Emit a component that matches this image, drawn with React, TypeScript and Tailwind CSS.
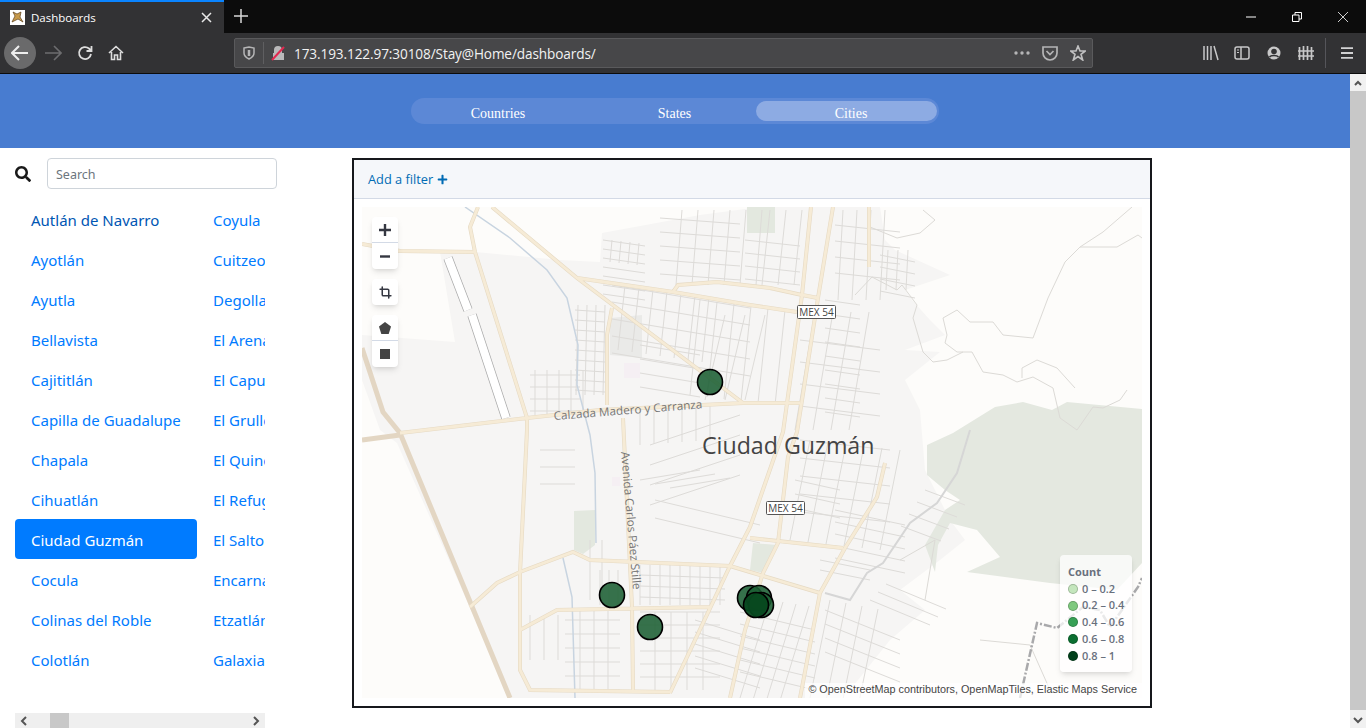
import React from "react";
import { FaSearch, FaPlus } from "react-icons/fa";
import { Crop } from "lucide-react";

const leftCities = ["Autlán de Navarro", "Ayotlán", "Ayutla", "Bellavista", "Cajititlán", "Capilla de Guadalupe", "Chapala", "Cihuatlán", "Ciudad Guzmán", "Cocula", "Colinas del Roble", "Colotlán"];
const rightCities = ["Coyula", "Cuitzeo", "Degollado", "El Arenal", "El Capulín", "El Grullo", "El Quince", "El Refugio", "El Salto", "Encarnación", "Etzatlán", "Galaxia"];

const legend = [
  { label: "0 – 0.2", color: "bg-[#c4e6bd]" },
  { label: "0.2 – 0.4", color: "bg-[#7fc97f]" },
  { label: "0.4 – 0.6", color: "bg-[#37a055]" },
  { label: "0.6 – 0.8", color: "bg-[#0b6e30]" },
  { label: "0.8 – 1", color: "bg-[#00401a]" },
];

// parallel street lines: first segment, step, count
const hatch = (x1: number, y1: number, x2: number, y2: number, dx: number, dy: number, n: number) => {
  let d = "";
  for (let i = 0; i < n; i++) d += `M${x1 + dx * i} ${y1 + dy * i}L${x2 + dx * i} ${y2 + dy * i}`;
  return d;
};

const streets = [
  hatch(603, 240, 645, 246, 0, 9, 7),
  hatch(612, 240, 610, 262, 9, 1, 4),
  hatch(660, 218, 740, 224, 0, 14, 5),
  hatch(682, 210, 676, 285, 16, 0, 6),
  hatch(745, 240, 800, 246, 0, 13, 4),
  hatch(770, 210, 762, 285, 16, 0, 3),
  hatch(612, 285, 750, 308, 0, 17, 5),
  hatch(625, 285, 618, 350, 14, 2, 7),
  hatch(700, 300, 690, 395, 17, 2, 6),
  hatch(575, 310, 605, 312, 0, 10, 9),
  hatch(578, 305, 576, 395, 9, 0, 4),
  hatch(640, 345, 700, 355, 0, 14, 4),
  hatch(530, 375, 580, 375, 0, 12, 4),
  hatch(535, 370, 535, 415, 12, 0, 5),
  hatch(825, 300, 860, 305, 0, 14, 9),
  hatch(843, 210, 838, 300, 14, 0, 4),
  hatch(835, 225, 900, 232, 0, 16, 4),
  hatch(765, 315, 745, 400, -20, 0, 3),
  hatch(815, 312, 795, 430, 18, 0, 4),
  hatch(800, 340, 880, 350, 0, 22, 4),
  hatch(800, 440, 890, 450, 0, 18, 5),
  hatch(810, 440, 790, 540, 18, 2, 6),
  hatch(650, 445, 740, 415, 0, 20, 4),
  hatch(640, 480, 700, 470, 15, 4, 3),
  hatch(655, 500, 760, 525, 0, 18, 2),
  hatch(640, 410, 640, 445, 14, -1, 6),
  hatch(590, 540, 590, 600, 12, 0, 2),
  hatch(540, 450, 575, 450, 0, 17, 3),
  hatch(600, 570, 600, 605, 9, 0, 3),
  hatch(640, 565, 640, 605, 10, 0, 9),
  hatch(640, 575, 725, 578, 0, 11, 3),
  hatch(640, 612, 720, 612, 0, 13, 6),
  hatch(655, 612, 655, 690, 16, 0, 4),
  hatch(565, 620, 620, 620, 0, 14, 6),
  hatch(580, 610, 580, 690, 14, 0, 3),
  hatch(530, 615, 530, 660, 14, 0, 3),
  hatch(695, 620, 760, 640, 0, 12, 5),
  hatch(770, 600, 740, 698, 13, 2, 4),
  hatch(740, 612, 815, 630, 0, 12, 6),
  hatch(830, 600, 810, 698, 16, 3, 4),
  hatch(825, 610, 900, 640, 0, 14, 4),
  hatch(835, 510, 905, 525, 0, 12, 5),
  hatch(795, 480, 840, 490, 0, 14, 3),
  hatch(925, 490, 965, 505, -8, 12, 4),
  hatch(870, 600, 930, 625, 8, -8, 3),
  hatch(820, 560, 870, 570, 0, 10, 2),
  hatch(880, 255, 915, 262, 0, 12, 4),
  hatch(888, 250, 886, 290, 10, 0, 3),
].join("");

const roads = [
  "M362 244L400 251L475 252",
  "M478 207L470 227L475 252L527 418L527 430L520 573V670L530 690L670 692",
  "M492 207L577 278L743 403",
  "M577 278L673 292L750 305L797 312M673 292L678 285L717 282L770 288L802 295L818 298",
  "M400 433L527 418L600 410L743 403L800 403",
  "M811 207L802 295L783 432L750 527L730 566L670 693",
  "M833 207L818 298L797 432L788 457L778 543L763 573L745 630L730 698",
  "M869 207V267",
  "M470 607L497 583L520 572L573 552L590 560L730 566L750 572L820 593",
  "M520 630L557 610L710 607",
  "M623 418L632 607L633 690",
  "M612 308L607 335L607 405",
  "M750 538L843 548",
  "M885 463L877 497L845 548L820 593L800 698",
].join("");

const Browser: React.FC = () => (
  <div className="bg-[#323234] text-[#e0e0e1]">
    <div className="flex h-[33px] bg-[#0c0c0c]">
      <div className="flex h-[33px] w-[224px] items-center border-t-2 border-[#0a84ff] bg-[#323234] pl-[10px]">
        <svg width="15" height="15" viewBox="0 0 15 15" className="shrink-0">
          <rect width="15" height="15" fill="#fff" />
          <path d="M2 12L5 6L3 2L7 4L11 2L10 7L13 12L8 9Z" fill="#c79a4b" stroke="#5a3d18" strokeWidth="0.7" />
        </svg>
        <span className="ml-[6px] font-['Open_Sans',sans-serif] text-[11.5px] text-white">Dashboards</span>
        <svg width="11" height="11" viewBox="0 0 11 11" className="ml-auto mr-[12px]">
          <path d="M1 1L10 10M10 1L1 10" stroke="#e8e8e8" strokeWidth="1.5" />
        </svg>
      </div>
      <svg width="14" height="14" viewBox="0 0 14 14" className="ml-[10px] mt-[9px]">
        <path d="M7 0V14M0 7H14" stroke="#d8d8d8" strokeWidth="1.5" />
      </svg>
      <div className="ml-auto flex items-center text-white">
        <svg width="10" height="2" viewBox="0 0 10 2"><path d="M0 1H10" stroke="#fff" /></svg>
        <svg width="10" height="10" viewBox="0 0 10 10" className="ml-[36px]">
          <path d="M.5 3H7V9.5H.5ZM3 3V.5H9.5V7H7" fill="none" stroke="#fff" />
        </svg>
        <svg width="10" height="10" viewBox="0 0 10 10" className="ml-[36px] mr-[18px]">
          <path d="M0 0L10 10M10 0L0 10" stroke="#fff" strokeWidth="0.8" />
        </svg>
      </div>
    </div>
    <div className="flex h-[41px] items-center border-b border-[#0c0c0c] pl-[4px]">
      <div className="flex h-[32px] w-[32px] items-center justify-center rounded-full bg-[#6a6a6b]">
        <svg width="18" height="16" viewBox="0 0 18 16"><path d="M1 8H17M8 1L1 8L8 15" fill="none" stroke="#eee" strokeWidth="2" /></svg>
      </div>
      <svg width="18" height="16" viewBox="0 0 18 16" className="ml-[8px]"><path d="M1 8H17M10 1L17 8L10 15" fill="none" stroke="#6d6d6f" strokeWidth="1.6" /></svg>
      <svg width="16" height="16" viewBox="0 0 16 16" className="ml-[15px]"><path d="M14 9A6 6 0 1 1 12 3.5L14 5.5M14.5 1V6H9.5" fill="none" stroke="#ddd" strokeWidth="1.8" /></svg>
      <svg width="16" height="16" viewBox="0 0 16 16" className="ml-[15px]"><path d="M1 8L8 1.5L15 8M3.5 7V14.5H6.5V10H9.5V14.5H12.5V7" fill="none" stroke="#ddd" strokeWidth="1.6" /></svg>
      <div className="ml-[110px] flex h-[30px] w-[859px] items-center rounded-[2px] border border-[#5a5a5c] bg-[#474749]">
        <svg width="12" height="14" viewBox="0 0 12 14" className="ml-[8px]"><path d="M1 2L6 1L11 2V7C11 10 8 12 6 13C4 12 1 10 1 7Z" fill="none" stroke="#b5b5b6" strokeWidth="1.5" /><path d="M6 4V10" stroke="#b5b5b6" strokeWidth="2.5" /></svg>
        <div className="ml-[8px] h-[22px] w-px bg-[#5f5f61]" />
        <svg width="15" height="16" viewBox="0 0 15 16" className="ml-[7px]"><path d="M3 8V5A4 4 0 0 1 11 5V8H13V15H2V8Z" fill="#b9b9ba" /><path d="M1 15L13 2" stroke="#e22850" strokeWidth="2" /></svg>
        <span className="ml-[8px] pt-[2px] font-['Open_Sans',sans-serif] text-[13.6px] tracking-[-0.1px] text-[#f2f2f2]">173.193.122.97:30108/Stay@Home/dashboards/</span>
        <svg width="16" height="4" viewBox="0 0 16 4" className="ml-auto"><circle cx="2" cy="2" r="1.7" fill="#b5b5b6" /><circle cx="8" cy="2" r="1.7" fill="#b5b5b6" /><circle cx="14" cy="2" r="1.7" fill="#b5b5b6" /></svg>
        <svg width="16" height="16" viewBox="0 0 16 16" className="ml-[12px]"><path d="M1 2H15V8A7 7 0 0 1 1 8Z" fill="none" stroke="#b5b5b6" strokeWidth="1.7" /><path d="M4.5 6L8 9.5L11.5 6" fill="none" stroke="#b5b5b6" strokeWidth="1.7" /></svg>
        <svg width="16" height="16" viewBox="0 0 16 16" className="ml-[12px] mr-[6px]"><path d="M8 1L10 6H15.3L11 9.3L12.7 15L8 11.6L3.3 15L5 9.3L.7 6H6Z" fill="none" stroke="#c0c0c1" strokeWidth="1.6" /></svg>
      </div>
      <svg width="16" height="16" viewBox="0 0 16 16" className="ml-[110px]"><path d="M1 1V15M4.5 1V15M8 1V15M11 1L15 15" stroke="#c8c8c9" strokeWidth="1.5" fill="none" /></svg>
      <svg width="16" height="14" viewBox="0 0 16 14" className="ml-[15px]"><rect x="1" y="1" width="14" height="12" rx="2" fill="none" stroke="#c8c8c9" strokeWidth="1.5" /><path d="M7 1V13" stroke="#c8c8c9" strokeWidth="1.5" /><path d="M3 4H5M3 6.5H5" stroke="#c8c8c9" /></svg>
      <svg width="14" height="14" viewBox="0 0 14 14" className="ml-[17px]"><circle cx="7" cy="7" r="6.5" fill="#c8c8c9" /><circle cx="7" cy="5.5" r="2.8" fill="#323234" /><path d="M2.5 11C4 9 10 9 11.5 11" fill="none" stroke="#323234" strokeWidth="1.5" /></svg>
      <svg width="16" height="16" viewBox="0 0 16 16" className="ml-[17px]"><path d="M1.5 2V15M5.5 1V15M9.5 1V15M13.5 2V15M0 6H16M0 11H16" stroke="#c8c8c9" strokeWidth="1.7" /></svg>
      <div className="ml-[11px] h-[30px] w-px bg-[#55555a]" />
      <svg width="12" height="12" viewBox="0 0 12 12" className="ml-[15px]"><path d="M0 1.2H12M0 6H12M0 10.8H12" stroke="#d2d2d3" strokeWidth="1.8" /></svg>
    </div>
  </div>
);

const MapArt: React.FC = () => (
  <svg viewBox="362 207 780 491" className="block h-full w-full">
    <rect x="362" y="207" width="780" height="491" fill="#fdfcfa" />
    <path d="M362 335L455 342L440 252L475 252L560 260L600 262L602 233L700 215L760 207L880 207L885 240L895 250L950 275L905 290L912 300L930 320L945 335L905 350L940 352L905 380L920 410L925 470L950 520L965 540L940 560L900 590L925 610L890 640L850 690L840 698L510 698L397 443L380 430L362 380Z" fill="#f6f5f4" />
    <path d="M953 433L995 407L1023 402L1052 410L1067 402L1142 409V563L1117 590L1050 583L967 572L1000 557L977 530L950 523L938 545L935 572L925 545L945 510L960 500L945 490L927 475V445Z" fill="#e4e8e0" />
    <path d="M747 207H775V233H747ZM574 511L595 510V545L583 554L574 550ZM753 543L777 545L763 573L750 570Z" fill="#e3e8df" />
    <path d="M610 318L642 315V358L610 355Z" fill="#eaeae8" />
    <path d="M612 477H620V486H612ZM624 363H640V378H624Z" fill="#f5eff3" />

    <path d={streets} fill="none" stroke="#dddbd8" strokeWidth="1" />
    <path d="M1132 207L1103 232L1080 247L1065 262L1048 298L1033 338L1003 335L993 322L970 322L957 310L943 318L947 335L945 343L957 352L972 352L983 372L1003 375L1017 382L1033 377L1053 388L1060 418L1077 430L1093 407L1103 408L1120 400L1127 390M1080 247L1117 247L1138 235L1142 238M1022 378L1022 368L1037 360L1057 368L1075 388M870 227L897 238L920 233L935 220L923 210M855 295L872 277L897 290L902 285L917 305L913 318L923 352L933 362L947 360L963 352M900 560L935 540L925 600M980 640L1030 645L1050 690" fill="none" stroke="#dcdad6" strokeWidth="1" />
    <path d="M825 593L850 600L867 573L883 563L910 523L937 503L957 473L970 430" fill="none" stroke="#d6d6d6" strokeWidth="2" />
    <path d="M1020 698L1037 623L1057 628L1083 607L1100 610L1110 627L1138 587L1142 578" fill="none" stroke="#a9a9ab" strokeWidth="2.5" strokeDasharray="8 2 2 2" />
    <path d="M465 207L510 238L547 270L567 298L578 345L577 385L590 435L595 473L596 543M563 558L572 597L575 698" fill="none" stroke="#c8d4e0" strokeWidth="1.5" />
    <path d="M448 258L468 310M472 315L506 418" stroke="#ababab" strokeWidth="9.5" />
    <path d="M448 258L468 310M472 315L506 418" stroke="#ffffff" strokeWidth="8" />

    <path d="M362 348L383 412L400 433L510 698M362 440L400 435" fill="none" stroke="#e3d6c3" strokeWidth="5" />
    <path d={roads} fill="none" stroke="#e6dac4" strokeWidth="4" />
    <path d={roads} fill="none" stroke="#f6ebd6" strokeWidth="2.8" />

    <text x="554" y="420" transform="rotate(-4.5 554 420)" className="fill-[#777] font-['Open_Sans',sans-serif] text-[11.7px]">Calzada Madero y Carranza</text>
    <text x="621" y="452" transform="rotate(85 621 452)" className="fill-[#777] font-['Open_Sans',sans-serif] text-[11.7px]">Avenida Carlos Páez Stille</text>
    <text x="702" y="454" className="fill-[#444] font-['Open_Sans',sans-serif] text-[23.2px]">Ciudad Guzmán</text>

    <g className="font-['Open_Sans',sans-serif] text-[10px]">
      <rect x="797.5" y="305.5" width="38" height="13" rx="1" fill="#fff" stroke="#555" />
      <text x="816.5" y="316" textAnchor="middle" fill="#444">MEX 54</text>
      <rect x="766.5" y="501.5" width="38" height="13" rx="1" fill="#fff" stroke="#555" />
      <text x="785.5" y="512" textAnchor="middle" fill="#444">MEX 54</text>
    </g>

    <g stroke="#000" strokeWidth="1.6">
      <circle cx="710" cy="382" r="12.5" fill="#1b5e33" fillOpacity="0.88" />
      <circle cx="612" cy="595" r="12.5" fill="#1b5e33" fillOpacity="0.88" />
      <circle cx="650" cy="627" r="12.5" fill="#1b5e33" fillOpacity="0.88" />
      <circle cx="750" cy="598" r="12.5" fill="#1b5e33" fillOpacity="0.88" />
      <circle cx="759" cy="598" r="12.5" fill="#1b5e33" fillOpacity="0.88" />
      <circle cx="761" cy="605" r="12.5" fill="#1b5e33" fillOpacity="0.88" />
      <circle cx="756" cy="605" r="12.5" fill="#07481f" fillOpacity="0.95" />
    </g>
  </svg>
);

const MapCard: React.FC = () => (
  <div className="mt-[10px] flex h-[550px] w-[800px] flex-col border-2 border-[#16181c] bg-white">
    <div className="flex h-[39px] items-center border-b border-[#d3dae6] bg-[#f5f7fa] pl-[14px] pt-[1px] font-['Open_Sans',sans-serif] text-[12.8px] text-[#006bb4]">
      Add a filter
      <FaPlus className="ml-[4px] text-[11px]" />
    </div>
    <div className="relative ml-[8px] mt-[8px] h-[491px] w-[780px]">
      <MapArt />
      <div className="absolute left-[10px] top-[10px] flex flex-col gap-[10px] text-[#343741]">
        <div className="w-[26px] divide-y divide-[#d3dae6] rounded bg-white shadow-md">
          <div className="flex h-[26px] items-center justify-center">
            <svg width="12" height="12" viewBox="0 0 12 12"><path d="M6 0V12M0 6H12" stroke="#343741" strokeWidth="2.4" /></svg>
          </div>
          <div className="flex h-[26px] items-center justify-center">
            <svg width="10" height="3" viewBox="0 0 10 3"><path d="M0 1.5H10" stroke="#343741" strokeWidth="2.4" /></svg>
          </div>
        </div>
        <div className="flex h-[26px] w-[26px] items-center justify-center rounded bg-white shadow-md">
          <Crop size={13} strokeWidth={2.8} />
        </div>
        <div className="w-[26px] divide-y divide-[#d3dae6] rounded bg-white shadow-md">
          <div className="flex h-[26px] items-center justify-center">
            <svg width="12" height="12" viewBox="0 0 12 12"><path d="M6 0L12 4.5L9.7 12H2.3L0 4.5Z" fill="#444" /></svg>
          </div>
          <div className="flex h-[26px] items-center justify-center">
            <div className="h-[10px] w-[10px] bg-[#444]" />
          </div>
        </div>
      </div>
      <div className="absolute bottom-[26px] right-[10px] flex h-[117px] w-[72px] flex-col rounded bg-white/75 pl-[8px] pt-[9px] font-['Open_Sans',sans-serif] text-[11px] font-semibold leading-[16.7px] text-[#69707d] shadow-md">
        <div className="font-bold">Count</div>
        {legend.map((l) => (
          <div key={l.label} className="flex items-center gap-[4px] whitespace-nowrap">
            <span className={`h-[10px] w-[10px] rounded-full border border-black/20 ${l.color}`} />
            {l.label}
          </div>
        ))}
      </div>
      <div className="absolute bottom-0 right-0 bg-white/70 pb-[2px] pl-[3px] pr-[5px] font-['Liberation_Sans',sans-serif] text-[10.8px] leading-[13px] text-[#444]">
        © OpenStreetMap contributors, OpenMapTiles, Elastic Maps Service
      </div>
    </div>
  </div>
);

const CityList: React.FC = () => (
  <div className="w-[352px] shrink-0">
    <div className="mt-[10px] flex items-center pl-[15px]">
      <FaSearch className="text-[16px] text-[#1a1a1a]" />
      <input
        placeholder="Search"
        className="ml-[16px] h-[31px] w-[230px] rounded border border-[#ced4da] px-2 pt-[2px] font-['Noto_Sans',sans-serif] text-[12.5px] placeholder:text-[#6c757d]"
      />
    </div>
    <div className="ml-[15px] mt-[10px] flex h-[480px] w-[250px] overflow-hidden font-['Noto_Sans',sans-serif] text-[15px] text-[#007bff]">
      <div className="w-[182px] shrink-0">
        {leftCities.map((c, i) => (
          <div
            key={c}
            className={`flex h-10 items-center whitespace-nowrap rounded px-4 pt-[3px] ${c === "Ciudad Guzmán" ? "bg-[#007bff] text-white" : i === 0 ? "text-[#0056b3]" : ""}`}
          >
            {c}
          </div>
        ))}
      </div>
      <div className="shrink-0">
        {rightCities.map((c) => (
          <div key={c} className="flex h-10 items-center whitespace-nowrap pl-[16px] pr-4 pt-[3px]">
            {c}
          </div>
        ))}
      </div>
    </div>
    <div className="ml-[15px] mt-[34px] flex h-[15px] w-[250px] items-center bg-[#efefef]">
      <svg width="8" height="10" viewBox="0 0 8 10" className="ml-[5px]"><path d="M6 1L2 5L6 9" fill="none" stroke="#555" strokeWidth="2" /></svg>
      <div className="ml-[22px] h-[15px] w-[19px] bg-[#c8c8c8]" />
      <svg width="8" height="10" viewBox="0 0 8 10" className="ml-auto mr-[5px]"><path d="M2 1L6 5L2 9" fill="none" stroke="#555" strokeWidth="2" /></svg>
    </div>
  </div>
);

export default function App() {
  return (
    <div className="flex h-[728px] w-[1366px] flex-col overflow-hidden bg-white">
      <Browser />
      <div className="flex flex-1">
        <div className="flex w-[1350px] flex-col">
          <div className="flex h-[74px] items-center justify-center bg-[#487cd0]">
            <div className="ml-[-1px] flex h-[26px] w-[528px] items-center rounded-full bg-[#5c88d6] pr-[2px] font-['Liberation_Serif',serif] text-[14px] text-white">
              <div className="w-[175px] pt-[4px] text-center">Countries</div>
              <div className="w-[170px] pl-[8px] pt-[4px] text-center">States</div>
              <div className="flex h-[20px] flex-1 items-center justify-center rounded-full bg-[#8dabe3] pl-[10px] pt-[4px]">Cities</div>
            </div>
          </div>
          <div className="flex flex-1">
            <CityList />
            <MapCard />
          </div>
        </div>
        <div className="flex w-[16px] flex-col items-center bg-[#f1f1f1]">
          <svg width="8" height="6" viewBox="0 0 8 6" className="mt-[6px]"><path d="M1 5L4 2L7 5" fill="none" stroke="#555" strokeWidth="2" /></svg>
          <div className="mt-[5px] h-[619px] w-full bg-[#c8c8c8]" />
          <svg width="10" height="7" viewBox="0 0 10 7" className="mt-[7px]"><path d="M1 1L5 5L9 1" fill="none" stroke="#555" strokeWidth="2" /></svg>
        </div>
      </div>
    </div>
  );
}
